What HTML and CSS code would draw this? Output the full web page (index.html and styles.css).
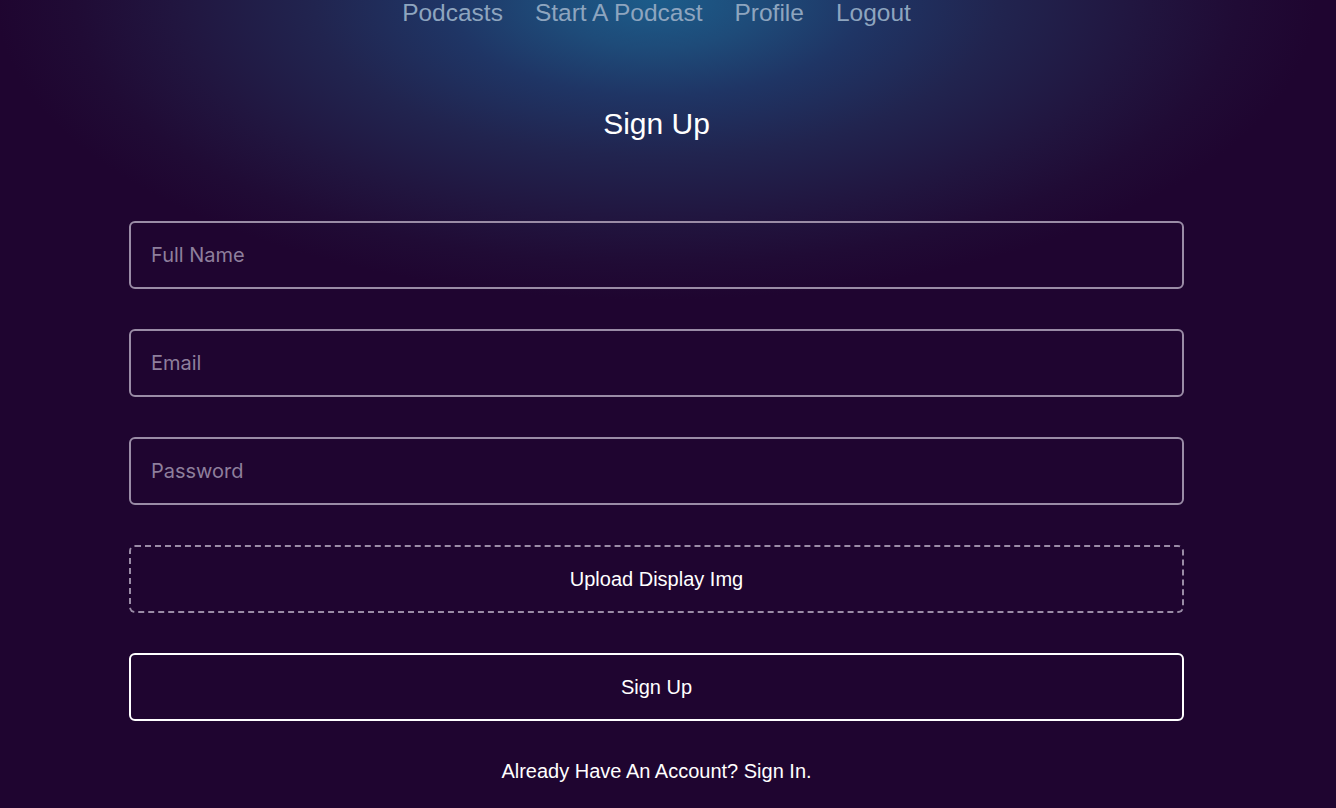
FILE: index.html
```html
<!DOCTYPE html>
<html lang="en">
<head>
<meta charset="utf-8">
<title>Sign Up</title>
<link rel="stylesheet" href="styles.css">
</head>
<body>
<div class="page">
  <nav class="nav">
    <a href="#" class="nav-link">Podcasts</a>
    <a href="#" class="nav-link">Start A Podcast</a>
    <a href="#" class="nav-link">Profile</a>
    <a href="#" class="nav-link">Logout</a>
  </nav>
  <h1 class="title">Sign Up</h1>
  <form class="form">
    <input class="field" type="text" placeholder="Full Name">
    <input class="field" type="email" placeholder="Email">
    <input class="field" type="password" placeholder="Password">
    <label class="upload">Upload Display Img</label>
    <button class="submit" type="button">Sign Up</button>
  </form>
  <p class="switch">Already Have An Account? Sign In.</p>
</div>
</body>
</html>
```
FILE: styles.css
```css
html, body {
  margin: 0;
  padding: 0;
  height: 100%;
}
body {
  background: radial-gradient(ellipse 660px 300px at 656px 0, #1c5c8a 0%, #1e4b79 16%, #1f3565 32%, #21244f 52%, #211640 72%, #200b35 88%, #1f0530 100%), #1f0530;
  font-family: "Liberation Sans", Arial, sans-serif;
  color: #ffffff;
  overflow: hidden;
}
.page {
  width: 1313px;
}
.nav {
  display: flex;
  justify-content: center;
  gap: 32px;
  font-size: 24.5px;
  line-height: 25px;
  height: 25px;
}
.nav-link {
  color: #8ea5bf;
  text-decoration: none;
}
.title {
  margin: 82px 0 80px;
  font-size: 30px;
  line-height: 34px;
  font-weight: 400;
  text-align: center;
}
.form {
  width: 1055px;
  margin: 0 auto;
  display: flex;
  flex-direction: column;
  gap: 40px;
}
.field, .upload, .submit {
  box-sizing: border-box;
  height: 68px;
  width: 100%;
  border-radius: 6px;
  background: transparent;
  margin: 0;
}
.field {
  border: 2px solid #9a8ca6;
  padding: 0 20px;
  font-family: Inter, "Noto Sans", sans-serif;
  font-size: 20px;
  color: #ffffff;
  outline: none;
}
.field::placeholder {
  color: #8e7f9c;
}
.upload {
  display: flex;
  align-items: center;
  justify-content: center;
  border: 2px dashed #9a8ca6;
  font-size: 20px;
  color: #ffffff;
}
.submit {
  border: 2px solid #ffffff;
  font-family: "Liberation Sans", Arial, sans-serif;
  font-size: 20px;
  color: #ffffff;
  padding: 0;
}
.switch {
  margin: 39px 0 0;
  font-size: 20px;
  line-height: 23px;
  text-align: center;
}
```
